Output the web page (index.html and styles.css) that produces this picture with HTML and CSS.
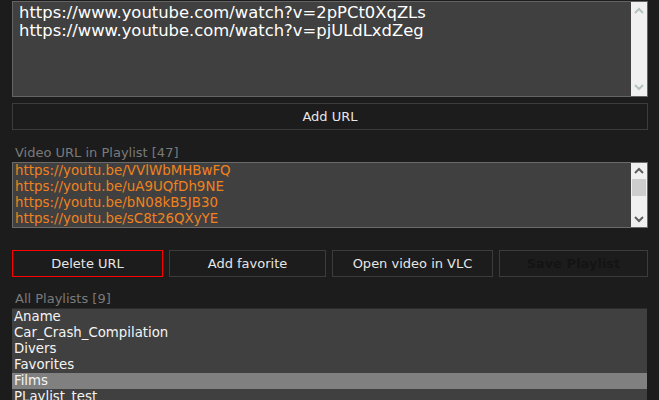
FILE: index.html
```html
<!DOCTYPE html>
<html>
<head>
<meta charset="utf-8">
<link rel="stylesheet" href="styles.css">
</head>
<body>
<div class="app">
  <div class="textarea">
    <div class="ta-text">
      <div>https://www.youtube.com/watch?v=2pPCt0XqZLs</div>
      <div>https://www.youtube.com/watch?v=pjULdLxdZeg</div>
    </div>
    <div class="sb">
      <svg class="arr" width="12" height="8" viewBox="0 0 12 8"><path d="M2 6 L6 2 L10 6" fill="none" stroke="#b4c4bc" stroke-width="2"/></svg>
      <div class="sb-track"></div>
      <svg class="arr" width="12" height="8" viewBox="0 0 12 8"><path d="M2 2 L6 6 L10 2" fill="none" stroke="#b4c4bc" stroke-width="2"/></svg>
    </div>
  </div>
  <div class="btn wide">Add URL</div>
  <div class="label l1">Video URL in Playlist [47]</div>
  <div class="list1">
    <div class="rows orange">
      <div class="row">https://youtu.be/VVlWbMHBwFQ</div>
      <div class="row">https://youtu.be/uA9UQfDh9NE</div>
      <div class="row">https://youtu.be/bN08kB5JB30</div>
      <div class="row">https://youtu.be/sC8t26QXyYE</div>
    </div>
    <div class="sb">
      <svg class="arr" width="12" height="8" viewBox="0 0 12 8"><path d="M2 6 L6 2 L10 6" fill="none" stroke="#606060" stroke-width="2"/></svg>
      <div class="sb-track"><div class="thumb"></div></div>
      <svg class="arr" width="12" height="8" viewBox="0 0 12 8"><path d="M2 2 L6 6 L10 2" fill="none" stroke="#606060" stroke-width="2"/></svg>
    </div>
  </div>
  <div class="btnrow">
    <div class="btn danger">Delete URL</div>
    <div class="btn">Add favorite</div>
    <div class="btn">Open video in VLC</div>
    <div class="btn disabled">Save Playlist</div>
  </div>
  <div class="label l2">All Playlists [9]</div>
  <div class="list2">
    <div class="row">Aname</div>
    <div class="row">Car_Crash_Compilation</div>
    <div class="row">Divers</div>
    <div class="row">Favorites</div>
    <div class="row sel">Films</div>
    <div class="row">PLaylist_test</div>
  </div>
</div>
</body>
</html>
```
FILE: styles.css
```css
html, body {
  margin: 0;
  padding: 0;
  background: #1c1c1c;
  overflow: hidden;
  height: 400px;
}
.app {
  width: 636px;
  padding: 1px 0 0 12px;
  font-family: "DejaVu Sans", Verdana, sans-serif;
  color: #f0f0f0;
}
.textarea {
  height: 94px;
  border: 1px solid #646464;
  background: #404040;
  display: flex;
}
.ta-text {
  flex: 1;
  padding: 2px 0 0 6px;
  font-size: 16.4px;
  line-height: 18px;
  color: #ffffff;
}
.sb {
  width: 16px;
  background: #f0f0f0;
  display: flex;
  flex-direction: column;
  align-items: center;
}
.arr { flex: none; margin: 5px 0; }
.sb-track { flex: 1; width: 100%; }
.thumb {
  margin: 0 1px;
  height: 17px;
  background: #cdcdcd;
}
.btn {
  box-sizing: border-box;
  height: 27px;
  border: 1px solid #3c3c3c;
  display: flex;
  align-items: center;
  justify-content: center;
  font-size: 13px;
  color: #e6e6e6;
}
.wide { margin-top: 6px; }
.label {
  font-size: 13px;
  color: #7a7a7a;
  padding-left: 3px;
  line-height: 16px;
}
.l1 { margin-top: 15px; }
.list1 {
  margin-top: 1px;
  height: 64px;
  border: 1px solid #6a6a6a;
  background: #404040;
  display: flex;
}
.rows { flex: 1; }
.row {
  height: 16px;
  line-height: 16px;
  font-size: 13.3px;
  padding-left: 2px;
  white-space: nowrap;
}
.orange .row { color: #f0821e; font-size: 13.4px; }
.list1 .arr { margin: 4px 0; }
.btnrow {
  margin-top: 22px;
  display: grid;
  grid-template-columns: 151px 157px 161px 149px;
  column-gap: 6px;
}
.danger { border-color: #ff0000; }
.disabled { color: #141414; font-weight: bold; }
.l2 { margin-top: 14px; }
.list2 {
  margin-top: 1px;
  width: 635px;
  background: #404040;
  border-top: 1px solid #2c2c2c;
  height: 120px;
}
.list2 .row { color: #f4f4f4; }
.list2 .sel { background: #808080; }
```
